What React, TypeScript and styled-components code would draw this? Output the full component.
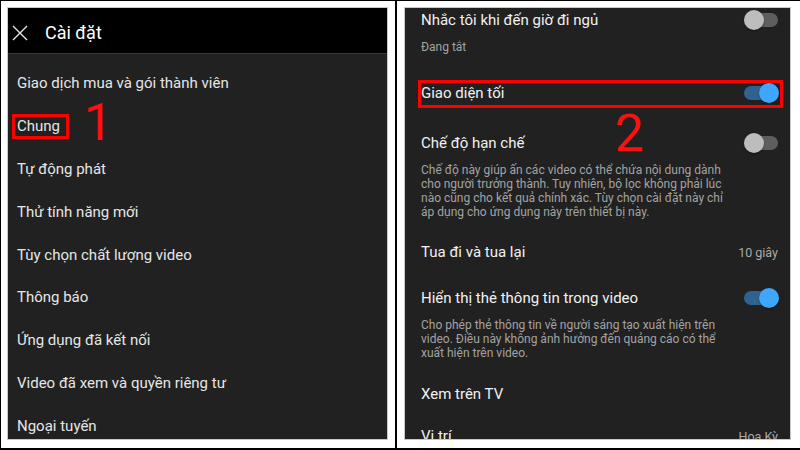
import React from "react";
import styled, { createGlobalStyle } from "styled-components";

const Global = createGlobalStyle`
  html, body { margin: 0; padding: 0; background: #fff; }
  body {
    width: 800px; height: 450px; overflow: hidden;
    font-family: Roboto, "Noto Sans", "Liberation Sans", sans-serif;
  }
  * { box-sizing: border-box; }
`;

const Frame = styled.div`
  display: flex;
  width: 800px;
  height: 450px;
  background: #fff;
  border-top: 1px solid #000;
  border-left: 1px solid #000;
  border-bottom: 2px solid #000;
`;

const Half = styled.div<{ $pad: string; $width?: number }>`
  display: flex;
  padding: ${(p) => p.$pad};
  ${(p) => (p.$width ? `width: ${p.$width}px; flex: none;` : "flex: 1;")}
`;

const Divider = styled.div`
  width: 2px;
  flex: none;
  background: #000;
`;

const Panel = styled.div`
  position: relative;
  flex: 1;
  display: flex;
  flex-direction: column;
  background: #212121;
  overflow: hidden;
  box-shadow: 0 0 0 1px #c9c9c9;
`;

const Header = styled.div`
  height: 46px;
  flex: none;
  display: flex;
  align-items: center;
  gap: 17px;
  padding: 4px 0 0 4px;
  background: #000;
  border-bottom: 1px solid #3a3a3a;
`;

const HeaderTitle = styled.div`
  color: #fff;
  font-size: 18px;
  line-height: 22px;
`;

const MenuList = styled.div`
  display: flex;
  flex-direction: column;
  padding-top: 8px;
`;

const MenuItem = styled.div`
  height: 42.8px;
  flex: none;
  display: flex;
  align-items: center;
  padding-left: 9px;
  color: #e6e6e6;
  font-size: 15px;
`;

const Highlight = styled.span`
  display: inline-flex;
  align-items: center;
  height: 25px;
  margin-left: -5px;
  padding: 0 6px 0 2px;
  border: 3px solid #ff0000;
`;

const Marker = styled.div<{ $left: number; $top: number }>`
  position: absolute;
  left: ${(p) => p.$left}px;
  top: ${(p) => p.$top}px;
  color: #ff1010;
  font-size: 52px;
  line-height: 1;
  font-family: Roboto, "Liberation Sans", sans-serif;
`;

const SettingsList = styled.div`
  display: flex;
  flex-direction: column;
  padding: 0 12px 0 16px;
`;

const Row = styled.div<{ $pt: number }>`
  display: flex;
  flex-direction: column;
  padding-top: ${(p) => p.$pt}px;
  flex: none;
`;

const RowHead = styled.div<{ $boxed?: boolean }>`
  position: relative;
  height: 20px;
  display: flex;
  align-items: center;
  justify-content: space-between;
  ${(p) =>
    p.$boxed
      ? `&::after {
    content: "";
    position: absolute;
    left: -3px; right: -5px; top: -3px; bottom: -5px;
    border: 3px solid #ff0000;
  }`
      : ""}
`;

const Title = styled.div`
  color: #f1f1f1;
  font-size: 15px;
  line-height: 20px;
  white-space: nowrap;
`;

const Value = styled.div`
  color: #aaaaaa;
  font-size: 12.5px;
`;

const SubText = styled.div`
  margin-top: 10px;
  color: #a3a3a3;
  font-size: 12px;
  line-height: 14px;
  white-space: nowrap;
`;

const Toggle = styled.span<{ $on?: boolean }>`
  position: relative;
  width: 34px;
  height: 20px;
  flex: none;
  &::before {
    content: "";
    position: absolute;
    left: 0; right: 0; top: 3px;
    height: 14px;
    border-radius: 7px;
    background: ${(p) => (p.$on ? "#2f6290" : "#5e5e5e")};
  }
  &::after {
    content: "";
    position: absolute;
    top: 0;
    ${(p) => (p.$on ? "right: -1px;" : "left: 0;")}
    width: 20px;
    height: 20px;
    border-radius: 50%;
    background: ${(p) => (p.$on ? "#3ea6ff" : "#bdbdbd")};
    box-shadow: 0 1px 2px rgba(0, 0, 0, 0.4);
  }
`;

const CloseIcon = () => (
  <svg width="16" height="16" viewBox="0 0 16 16">
    <path d="M1 1 L15 15 M15 1 L1 15" stroke="#e6e6e6" strokeWidth="1.4" fill="none" />
  </svg>
);

const menu = [
  "Giao dịch mua và gói thành viên",
  "Chung",
  "Tự động phát",
  "Thử tính năng mới",
  "Tùy chọn chất lượng video",
  "Thông báo",
  "Ứng dụng đã kết nối",
  "Video đã xem và quyền riêng tư",
  "Ngoại tuyến",
];

export default function App() {
  return (
    <>
      <Global />
      <Frame>
        <Half $width={394} $pad="7px 8px 9px 7px">
          <Panel>
            <Header>
              <CloseIcon />
              <HeaderTitle>Cài đặt</HeaderTitle>
            </Header>
            <MenuList>
              {menu.map((m) => (
                <MenuItem key={m}>{m === "Chung" ? <Highlight>{m}</Highlight> : m}</MenuItem>
              ))}
            </MenuList>
            <Marker $left={76} $top={89}>1</Marker>
          </Panel>
        </Half>
        <Divider />
        <Half $pad="7px 10px 9px 8px">
          <Panel>
            <SettingsList>
              <Row $pt={2}>
                <RowHead>
                  <Title>Nhắc tôi khi đến giờ đi ngủ</Title>
                  <Toggle />
                </RowHead>
                <SubText>Đang tắt</SubText>
              </Row>
              <Row $pt={29}>
                <RowHead $boxed>
                  <Title>Giao diện tối</Title>
                  <Toggle $on />
                </RowHead>
              </Row>
              <Row $pt={30}>
                <RowHead>
                  <Title>Chế độ hạn chế</Title>
                  <Toggle />
                </RowHead>
                <SubText>
                  Chế độ này giúp ấn các video có thể chứa nội dung dành
                  <br />
                  cho người trưởng thành. Tuy nhiên, bộ lọc không phải lúc
                  <br />
                  nào cũng cho kết quả chính xác. Tùy chọn cài đặt này chỉ
                  <br />
                  áp dụng cho ứng dụng này trên thiết bị này.
                </SubText>
              </Row>
              <Row $pt={23}>
                <RowHead>
                  <Title>Tua đi và tua lại</Title>
                  <Value>10 giây</Value>
                </RowHead>
              </Row>
              <Row $pt={26}>
                <RowHead>
                  <Title>Hiển thị thẻ thông tin trong video</Title>
                  <Toggle $on />
                </RowHead>
                <SubText>
                  Cho phép thẻ thông tin về người sáng tạo xuất hiện trên
                  <br />
                  video. Điều này không ảnh hưởng đến quảng cáo có thể
                  <br />
                  xuất hiện trên video.
                </SubText>
              </Row>
              <Row $pt={24}>
                <RowHead>
                  <Title>Xem trên TV</Title>
                </RowHead>
              </Row>
              <Row $pt={22}>
                <RowHead>
                  <Title>Vị trí</Title>
                  <Value>Hoa Kỳ</Value>
                </RowHead>
              </Row>
            </SettingsList>
            <Marker $left={210} $top={100}>2</Marker>
          </Panel>
        </Half>
      </Frame>
    </>
  );
}
